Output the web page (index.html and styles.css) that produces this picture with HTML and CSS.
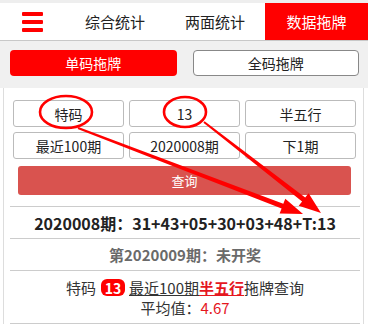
FILE: index.html
```html
<!DOCTYPE html>
<html lang="zh">
<head>
<meta charset="utf-8">
<link rel="stylesheet" href="styles.css">
</head>
<body>
<div class="header">
  <div class="menu">
    <svg width="22" height="20" viewBox="0 0 22 20"><rect x="0" y="0" width="21" height="4" rx="1" fill="#f00"/><rect x="0" y="8" width="21" height="4" rx="1" fill="#f00"/><rect x="0" y="16" width="21" height="4" rx="1" fill="#f00"/></svg>
  </div>
  <div class="tab">综合统计</div>
  <div class="tab">两面统计</div>
  <div class="tab active">数据拖牌</div>
</div>
<div class="subtabs">
  <div class="sub on">单码拖牌</div>
  <div class="sub off">全码拖牌</div>
</div>
<div class="panel">
  <div class="form">
    <div class="opt">特码</div>
    <div class="opt">13</div>
    <div class="opt">半五行</div>
    <div class="opt">最近100期</div>
    <div class="opt">2020008期</div>
    <div class="opt">下1期</div>
  </div>
  <div class="query">查询</div>
  <div class="results">
    <div class="row draw">2020008期：31+43+05+30+03+48+T:13</div>
    <div class="row next">第2020009期：未开奖</div>
    <div class="row summary">
      <div class="line"><span>特码</span><span class="badge">13</span><span class="ul">最近100期</span><span class="ul red b">半五行</span><span>拖牌查询</span></div>
      <div class="line"><span>平均值：</span><span class="red">4.67</span></div>
    </div>
  </div>
</div>
<svg class="marks" width="368" height="324" viewBox="0 0 368 324">
  <ellipse cx="66" cy="112" rx="26" ry="16" fill="none" stroke="#f00" stroke-width="2.6"/>
  <ellipse cx="185" cy="112" rx="21" ry="15" fill="none" stroke="#f00" stroke-width="2.6"/>
  <polygon fill="#f00" points="77.6,128.9 281.6,208.5 279.6,213.6 303,214 285.3,198.7 283.3,203.8 78.4,127.1"/>
  <polygon fill="#f00" points="203.4,122.8 302.1,201.5 298.7,205.8 321,213 308.6,193.2 305.2,197.5 204.6,121.2"/>
</svg>
</body>
</html>
```
FILE: styles.css
```css
body {
  margin: 0;
  width: 368px;
  height: 324px;
  overflow: hidden;
  position: relative;
  background: #fff;
  font-family: "Noto Sans CJK SC", "Noto Sans", sans-serif;
  color: #222;
}
.header {
  display: grid;
  grid-template-columns: 65px 100px 100px 1fr;
  height: 37px;
  border-top: 3px solid #eeeeee;
  border-bottom: 1px solid #c8c8c8;
}
.menu {
  display: flex;
  align-items: center;
  justify-content: center;
  padding-left: 1px;
}
.tab {
  display: flex;
  align-items: center;
  justify-content: center;
  font-size: 15px;
  color: #222;
}
.tab.active {
  background: #ff0000;
  color: #fff;
}
.subtabs {
  background: #f0f0f0;
  display: grid;
  grid-template-columns: 1fr 1fr;
  gap: 16px;
  padding: 9px 9px 12px 10px;
}
.sub {
  height: 26px;
  box-sizing: border-box;
  border-radius: 4px;
  display: flex;
  align-items: center;
  justify-content: center;
  font-size: 14px;
}
.sub.on {
  background: #ff0000;
  color: #fff;
}
.sub.off {
  background: #fff;
  border: 1px solid #888;
  color: #222;
}
.panel {
  margin: 0 4px 0 3px;
  border-left: 1px solid #ddd;
  border-right: 1px solid #ddd;
  height: 236px;
}
.form {
  display: grid;
  grid-template-columns: repeat(3, 1fr);
  grid-auto-rows: 27px;
  gap: 5px;
  padding: 12px 7px 0 9px;
}
.opt {
  box-sizing: border-box;
  border: 1px solid #bbb;
  border-radius: 3px;
  display: flex;
  align-items: center;
  justify-content: center;
  font-size: 14px;
  color: #222;
}
.query {
  margin: 7px 12px 0 14px;
  height: 29px;
  border-radius: 3px;
  background: #d9534f;
  color: #fff;
  font-size: 13px;
  display: flex;
  align-items: center;
  justify-content: center;
}
.results {
  margin: 11px 3px 0 6px;
}
.row {
  border-top: 1px solid #ccc;
  display: flex;
  align-items: center;
  justify-content: center;
  box-sizing: border-box;
}
.draw {
  height: 32px;
  font-size: 16px;
  font-weight: bold;
  color: #222;
}
.next {
  height: 32px;
  font-size: 15px;
  font-weight: bold;
  color: #6a6a6a;
}
.summary {
  height: 54px;
  flex-direction: column;
  border-bottom: 1px solid #ccc;
  font-size: 15px;
  color: #333;
  padding-top: 1px;
}
.line {
  line-height: 20px;
  display: flex;
  align-items: center;
}
.badge {
  display: inline-flex;
  align-items: center;
  justify-content: center;
  width: 24px;
  height: 17px;
  margin: 0 4px 0 5px;
  border-radius: 6px;
  background: #ff0000;
  color: #fff;
  font-weight: bold;
  font-size: 14px;
}
.ul {
  text-decoration: underline;
}
.red {
  color: #e5171f;
}
.b {
  font-weight: bold;
}
.marks {
  position: absolute;
  left: 0;
  top: 0;
  pointer-events: none;
}
```
